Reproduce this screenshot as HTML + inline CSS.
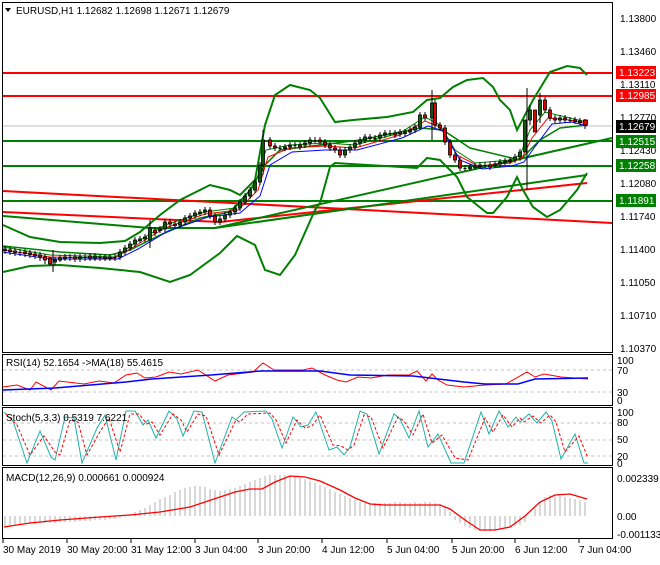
<!DOCTYPE html>
<html><head><meta charset="utf-8"><style>
html,body{margin:0;padding:0;background:#fff;}
body{width:660px;height:560px;overflow:hidden;font-family:"Liberation Sans",sans-serif;}
svg text{font-family:"Liberation Sans",sans-serif;font-size:10px;fill:#000;}
.g{fill:#0a5a0a;stroke:#000;stroke-width:0.8}
.r{fill:#e00000;stroke:#000;stroke-width:0.8}
.k{fill:#000}
</style></head><body>
<svg width="660" height="560" viewBox="0 0 660 560" xmlns="http://www.w3.org/2000/svg">
<rect width="660" height="560" fill="#fff"/>
<g fill="none" stroke="#000" stroke-width="1">
<rect x="2.5" y="2.5" width="610" height="350"/>
<rect x="2.5" y="354.5" width="610" height="51"/>
<rect x="2.5" y="407.5" width="610" height="58"/>
<rect x="2.5" y="467.5" width="610" height="71"/>
</g>
<g shape-rendering="crispEdges">
<line x1="3" y1="126" x2="612" y2="126" stroke="#c0c0c0"/>
<line x1="3" y1="73" x2="612" y2="73" stroke="#f00" stroke-width="2"/>
<line x1="3" y1="96" x2="612" y2="96" stroke="#f00" stroke-width="2"/>
<line x1="3" y1="141" x2="612" y2="141" stroke="#008000" stroke-width="2"/>
<line x1="3" y1="166" x2="612" y2="166" stroke="#008000" stroke-width="2"/>
<line x1="3" y1="201" x2="612" y2="201" stroke="#008000" stroke-width="2"/>
</g>
<g fill="none" stroke-width="2">
<polyline stroke="#f00" points="3,191 612,223"/>
<polyline stroke="#f00" points="3,212 220,222 587,183"/>
<polyline stroke="#008000" points="3,216 150,228 215,228 587,175"/>
<polyline stroke="#008000" points="215,228 612,138"/>
<polyline stroke="#008000" points="3,225 30,237 60,242 100,243 125,241 140,232 160,215 180,200 200,190 210,185 230,190 240,195 255,180 265,125 275,95 290,85 310,90 320,98 335,122 353,120 387,117 413,112 427,100 440,98 453,87 467,80 483,78 493,87 500,100 510,110 517,130 533,100 550,72 567,66 580,68 587,75"/>
<polyline stroke="#008000" points="3,272 30,266 60,265 100,268 140,272 170,282 190,275 220,253 237,236 255,245 265,270 280,275 295,255 315,210 320,203 330,167 335,163 417,168 427,158 440,160 457,177 467,197 487,213 493,213 507,197 517,177 523,190 533,207 547,217 560,210 577,190 587,173"/>
<polyline stroke="#008000" stroke-width="1.5" points="3,246 60,252 110,255 130,250 160,235 200,218 230,212 250,190 265,165 280,150 320,145 360,140 420,128 443,130 470,148 520,160 540,140 560,128 587,125"/>
</g>
<g fill="none" stroke-width="1">
<polyline stroke="#008000" points="3,247 50,255 115,257 135,243 165,225 205,212 235,208 255,185 266,150 290,145 325,143 355,145 400,133 425,117 440,125 455,150 475,163 510,160 520,155 530,130 545,112 570,118 587,122"/>
<polyline stroke="#f00" points="3,250 50,257 115,258 135,246 165,228 205,214 238,210 258,190 268,157 290,148 325,146 355,148 400,135 425,121 440,127 457,155 478,166 510,163 522,158 532,138 548,118 570,120 587,124"/>
<polyline stroke="#00f" points="3,252 50,259 118,259 138,249 168,231 208,217 240,213 260,196 270,165 292,152 325,150 357,150 402,138 428,126 443,131 460,160 482,169 512,166 524,162 534,148 552,124 572,122 587,126"/>
</g>
<!-- wicks -->
<path stroke="#000" stroke-width="1" fill="none" d="M5 246v8M10 247v8M15 248v8M20 249v7M25 249v8M30 250v8M35 251v8M40 252v9M45 254v10M50 257v8M53 250v22M55 257v8M60 255v7M65 254v7M70 254v7M75 254v8M80 254v8M85 254v7M90 253v8M95 253v8M100 254v7M105 254v7M110 254v7M115 254v7M120 249v11M125 245v10M130 241v10M135 237v10M140 236v7M145 234v8M150 220v28M155 227v9M160 226v7M165 219v13M170 219v8M175 221v7M180 219v9M185 215v10M190 213v8M195 210v9M200 209v7M205 207v8M210 207v12M215 213v12M220 216v9M225 212v10M230 209v9M235 205v10M240 199v12M245 193v12M250 187v12M255 179v14M260 162v23M263 130v45M270 137v12M275 143v8M280 145v6M285 144v7M290 142v8M295 142v6M300 142v8M305 140v8M310 137v9M315 137v6M320 137v8M325 139v9M330 142v9M335 145v8M340 147v11M345 147v11M350 144v9M355 140v10M360 137v9M365 134v9M370 134v7M375 135v6M380 132v9M385 130v8M390 130v6M395 130v8M400 129v8M405 129v7M410 127v8M415 124v9M420 112v18M425 112v9M432 90v50M435 100v28M440 122v9M445 125v20M450 139v19M455 152v11M460 157v14M465 165v6M470 164v7M475 163v7M480 162v7M485 162v6M490 162v8M495 161v7M500 159v8M505 158v7M510 157v7M515 154v9M520 149v11M527 88v102M530 105v20M535 112v14M540 93v30M545 97v16M550 107v14M555 115v8M560 115v8M565 115v8M570 117v6M575 117v7M580 118v7M585 119v10"/>
<!-- bodies -->
<g>
<rect class="r" x="3.5" y="249" width="3" height="1.5"/><rect class="r" x="8.5" y="250" width="3" height="1.5"/><rect class="r" x="13.5" y="251" width="3" height="1.5"/><rect class="k" x="18.5" y="252" width="3" height="1"/><rect class="r" x="23.5" y="252" width="3" height="1.5"/><rect class="r" x="28.5" y="253" width="3" height="1.5"/><rect class="r" x="33.5" y="254" width="3" height="1.5"/><rect class="r" x="38.5" y="255" width="3" height="2"/><rect class="r" x="43.5" y="257" width="3" height="3"/><rect class="r" x="48.5" y="258" width="3" height="6"/>
<rect class="g" x="53.5" y="260" width="3" height="2"/><rect class="g" x="58.5" y="258" width="3" height="2"/><rect class="g" x="63.5" y="257" width="3" height="1.5"/><rect class="k" x="68.5" y="257" width="3" height="1"/><rect class="r" x="73.5" y="257" width="3" height="2"/><rect class="g" x="78.5" y="257" width="3" height="2"/><rect class="k" x="83.5" y="257" width="3" height="1"/><rect class="r" x="88.5" y="256" width="3" height="2"/><rect class="g" x="93.5" y="256" width="3" height="2"/><rect class="k" x="98.5" y="257" width="3" height="1"/><rect class="r" x="103.5" y="257" width="3" height="1.5"/><rect class="g" x="108.5" y="257" width="3" height="1.5"/><rect class="k" x="113.5" y="257" width="3" height="1"/>
<rect class="g" x="118.5" y="252" width="3" height="5"/><rect class="g" x="123.5" y="248" width="3" height="4"/><rect class="g" x="128.5" y="244" width="3" height="4"/><rect class="g" x="133.5" y="240" width="3" height="4"/><rect class="g" x="138.5" y="239" width="3" height="1.5"/><rect class="g" x="143.5" y="237" width="3" height="2"/><rect class="g" x="148.5" y="228" width="3" height="12"/><rect class="r" x="153.5" y="230" width="3" height="3"/><rect class="g" x="158.5" y="229" width="3" height="1.5"/><rect class="g" x="163.5" y="222" width="3" height="7"/><rect class="r" x="168.5" y="222" width="3" height="2"/><rect class="r" x="173.5" y="224" width="3" height="1.5"/><rect class="g" x="178.5" y="222" width="3" height="3"/><rect class="g" x="183.5" y="218" width="3" height="4"/><rect class="g" x="188.5" y="216" width="3" height="2"/><rect class="g" x="193.5" y="213" width="3" height="3"/><rect class="g" x="198.5" y="212" width="3" height="1.5"/><rect class="g" x="203.5" y="210" width="3" height="2"/><rect class="r" x="208.5" y="210" width="3" height="6"/><rect class="r" x="213.5" y="216" width="3" height="6"/><rect class="g" x="218.5" y="219" width="3" height="3"/><rect class="g" x="223.5" y="215" width="3" height="4"/><rect class="g" x="228.5" y="212" width="3" height="3"/><rect class="g" x="233.5" y="208" width="3" height="4"/><rect class="g" x="238.5" y="202" width="3" height="6"/><rect class="g" x="243.5" y="196" width="3" height="6"/><rect class="g" x="248.5" y="190" width="3" height="6"/><rect class="g" x="253.5" y="182" width="3" height="8"/><rect class="g" x="258.5" y="165" width="3" height="17"/><rect class="g" x="261.5" y="140" width="3" height="25"/>
<rect class="r" x="268.5" y="140" width="3" height="6"/><rect class="r" x="273.5" y="146" width="3" height="2"/><rect class="k" x="278.5" y="148" width="3" height="1"/><rect class="g" x="283.5" y="147" width="3" height="1.5"/><rect class="g" x="288.5" y="145" width="3" height="2"/><rect class="k" x="293.5" y="145" width="3" height="1"/><rect class="r" x="298.5" y="145" width="3" height="2"/><rect class="g" x="303.5" y="143" width="3" height="2"/><rect class="g" x="308.5" y="140" width="3" height="3"/><rect class="k" x="313.5" y="140" width="3" height="1"/><rect class="r" x="318.5" y="140" width="3" height="2"/><rect class="r" x="323.5" y="142" width="3" height="3"/><rect class="r" x="328.5" y="145" width="3" height="3"/><rect class="r" x="333.5" y="148" width="3" height="2"/><rect class="r" x="338.5" y="150" width="3" height="5"/><rect class="g" x="343.5" y="150" width="3" height="5"/><rect class="g" x="348.5" y="147" width="3" height="3"/><rect class="g" x="353.5" y="143" width="3" height="4"/><rect class="g" x="358.5" y="140" width="3" height="3"/><rect class="g" x="363.5" y="137" width="3" height="3"/><rect class="r" x="368.5" y="137" width="3" height="1.5"/><rect class="k" x="373.5" y="138" width="3" height="1"/><rect class="g" x="378.5" y="135" width="3" height="3"/><rect class="g" x="383.5" y="133" width="3" height="2"/><rect class="k" x="388.5" y="133" width="3" height="1"/><rect class="r" x="393.5" y="133" width="3" height="2"/><rect class="g" x="398.5" y="132" width="3" height="2"/><rect class="g" x="403.5" y="132" width="3" height="1.5"/><rect class="g" x="408.5" y="130" width="3" height="2"/><rect class="g" x="413.5" y="127" width="3" height="3"/><rect class="g" x="418.5" y="115" width="3" height="12"/><rect class="r" x="423.5" y="115" width="3" height="3"/><rect class="g" x="430.5" y="103" width="3" height="15"/><rect class="r" x="433.5" y="103" width="3" height="22"/><rect class="r" x="438.5" y="125" width="3" height="3"/><rect class="r" x="443.5" y="128" width="3" height="14"/><rect class="r" x="448.5" y="142" width="3" height="13"/><rect class="r" x="453.5" y="155" width="3" height="5"/><rect class="r" x="458.5" y="160" width="3" height="8"/><rect class="k" x="463.5" y="168" width="3" height="1"/><rect class="g" x="468.5" y="167" width="3" height="1.5"/><rect class="g" x="473.5" y="166" width="3" height="1.5"/><rect class="g" x="478.5" y="165" width="3" height="1.5"/><rect class="k" x="483.5" y="165" width="3" height="1"/><rect class="r" x="488.5" y="165" width="3" height="2"/><rect class="g" x="493.5" y="164" width="3" height="1.5"/><rect class="g" x="498.5" y="162" width="3" height="2"/><rect class="g" x="503.5" y="161" width="3" height="1.5"/><rect class="g" x="508.5" y="160" width="3" height="1.5"/><rect class="g" x="513.5" y="157" width="3" height="3"/><rect class="g" x="518.5" y="152" width="3" height="5"/><rect class="g" x="523.5" y="120" width="3" height="32"/><rect class="g" x="528.5" y="110" width="3" height="10"/><rect class="r" x="533.5" y="110" width="3" height="22"/><rect class="g" x="538.5" y="100" width="3" height="15"/><rect class="r" x="543.5" y="100" width="3" height="10"/><rect class="r" x="548.5" y="110" width="3" height="8"/><rect class="r" x="553.5" y="118" width="3" height="2"/><rect class="g" x="558.5" y="118" width="3" height="2"/><rect class="r" x="563.5" y="118" width="3" height="2"/><rect class="k" x="568.5" y="120" width="3" height="1"/><rect class="r" x="573.5" y="120" width="3" height="1.5"/><rect class="r" x="578.5" y="121" width="3" height="1.5"/><rect class="r" x="583.5" y="120" width="4" height="5"/>
</g>
<path d="M5 8 L11 8 L8 12 Z" fill="#000"/>
<text x="16" y="14">EURUSD,H1  1.12682 1.12698 1.12671 1.12679</text>
<g>
<text x="620" y="22">1.13800</text>
<text x="620" y="55">1.13460</text>
<text x="620" y="88">1.13110</text>
<text x="620" y="121">1.12770</text>
<text x="620" y="154">1.12430</text>
<text x="620" y="187">1.12080</text>
<text x="620" y="220">1.11740</text>
<text x="620" y="253">1.11400</text>
<text x="620" y="286">1.11050</text>
<text x="620" y="319">1.10710</text>
<text x="620" y="352">1.10370</text>
<rect x="616" y="66" width="40" height="13" fill="#f00"/><text x="619" y="76" style="fill:#fff">1.13223</text>
<rect x="616" y="89" width="40" height="13" fill="#f00"/><text x="619" y="99" style="fill:#fff">1.12985</text>
<rect x="616" y="120" width="40" height="13" fill="#000"/><text x="619" y="130" style="fill:#fff">1.12679</text>
<rect x="616" y="135" width="40" height="13" fill="#008000"/><text x="619" y="145" style="fill:#fff">1.12515</text>
<rect x="616" y="159" width="40" height="13" fill="#008000"/><text x="619" y="169" style="fill:#fff">1.12258</text>
<rect x="616" y="194" width="40" height="13" fill="#008000"/><text x="619" y="204" style="fill:#fff">1.11891</text>
</g>
<g stroke="#c0c0c0" stroke-dasharray="3,3" shape-rendering="crispEdges">
<line x1="3" y1="370" x2="612" y2="370"/><line x1="3" y1="392" x2="612" y2="392"/>
<line x1="3" y1="423" x2="612" y2="423"/><line x1="3" y1="440" x2="612" y2="440"/><line x1="3" y1="456" x2="612" y2="456"/>
</g>
<polyline fill="none" stroke="#f00" points="3,387 17,385 30,390 36,382 51,390 59,381 84,384 99,381 114,383 126,375 137,373 145,378 156,377 169,372 181,374 198,370 215,381 228,375 253,372 263,363 274,370 303,370 312,368 325,375 337,380 346,382 358,377 371,378 388,375 409,375 417,371 426,381 432,374 438,380 447,385 464,387 485,385 506,384 527,372 535,377 544,374 561,377 588,379"/>
<polyline fill="none" stroke="#00f" stroke-width="1.5" points="3,390 55,388 126,382 152,379 211,375 261,371 320,371 350,375 413,376 447,380 464,382 485,384 518,384 535,379 588,378"/>
<text x="6" y="366">RSI(14) 52.1654  -&gt;MA(18) 55.4615</text>
<text x="617" y="364">100</text><text x="617" y="374">70</text><text x="617" y="396">30</text><text x="617" y="404">0</text>
<polyline fill="none" stroke="#20b2aa" points="4,412 13,421 27,463 40,431 51,457 55,460 65,417 74,418 82,463 97,428 105,415 116,460 126,411 135,411 143,425 148,420 156,438 169,411 177,419 183,436 194,411 202,412 215,463 232,417 236,420 244,412 266,411 272,419 282,448 293,417 301,427 308,425 316,412 329,450 337,447 344,455 350,447 360,411 367,414 379,454 394,414 400,419 409,438 419,411 428,447 438,434 451,463 464,463 481,412 489,434 499,411 508,427 516,417 520,422 529,414 537,423 546,412 552,421 561,459 575,434 584,463 588,463"/>
<polyline fill="none" stroke="#f00" stroke-dasharray="3,2" points="6,414 17,425 30,455 44,436 55,452 60,455 70,420 78,422 87,455 101,430 109,418 120,452 130,414 139,414 147,424 152,422 160,435 173,414 181,420 187,432 198,414 206,416 219,455 236,420 240,422 248,414 270,413 276,420 286,443 297,420 305,428 312,426 320,415 333,445 341,446 348,450 354,445 364,415 371,417 383,448 398,417 404,421 413,435 423,414 432,443 442,435 455,458 468,460 485,418 493,432 503,415 512,427 520,418 524,422 533,416 541,423 550,415 556,422 565,452 579,436 588,458"/>
<text x="6" y="421">Stoch(5,3,3) 0.5319 7.6221</text>
<text x="617" y="416">100</text><text x="617" y="426">80</text><text x="617" y="443">50</text><text x="617" y="460">20</text><text x="617" y="467">0</text>
<g stroke="#b0b0b0" stroke-width="1">
<path d="M5 516V526M10 516V526M15 516V525M20 516V525M25 516V524M30 516V524M35 516V524M40 516V523M45 516V523M50 516V523M55 516V523M60 516V522M65 516V522M70 516V522M75 516V522M80 516V521M85 516V521M90 516V521M95 516V520M100 516V520M105 516V520M110 516V519M115 516V519M120 516V518M125 516V517M130 516V514M135 516V512M140 516V510M145 516V508M150 516V505M155 516V502M160 516V499M165 516V497M170 516V495M175 516V492M180 516V490M185 516V488M190 516V487M195 516V486M200 516V486M205 516V487M210 516V489M215 516V490M220 516V491M225 516V490M230 516V489M235 516V488M240 516V486M245 516V484M250 516V482M255 516V480M260 516V478M265 516V476M270 516V475M275 516V475M280 516V475M285 516V475M290 516V476M295 516V477M300 516V478M305 516V479M310 516V481M315 516V483M320 516V485M325 516V487M330 516V489M335 516V492M340 516V494M345 516V496M350 516V498M355 516V500M360 516V502M365 516V503M370 516V504M375 516V503M380 516V503M385 516V503M390 516V503M395 516V502M400 516V502M405 516V503M410 516V503M415 516V502M420 516V503M425 516V502M430 516V502M435 516V503M440 516V504M445 516V507M450 516V512M455 516V520M460 516V523M465 516V526M470 516V528M475 516V530M480 516V530M485 516V531M490 516V531M495 516V530M500 516V529M505 516V528M510 516V527M515 516V526M520 516V525M525 516V522M530 516V516M535 516V508M540 516V502M545 516V497M550 516V495M555 516V495M560 516V496M565 516V497M570 516V498M575 516V499M580 516V500M585 516V502"/>
</g>
<polyline fill="none" stroke="#f00" stroke-width="1.3" points="4,527 30,523 60,520 100,517 130,515 160,512 190,507 220,497 235,492 250,489 262,489 275,482 290,476 305,477 320,481 340,490 355,498 370,504 385,505 440,505 450,509 465,520 480,530 495,530 510,527 525,516 540,502 555,495 570,494 587,499"/>
<text x="6" y="481">MACD(12,26,9) 0.000661 0.000924</text>
<text x="617" y="482">0.002339</text><text x="617" y="520">0.00</text><text x="617" y="538">-0.001133</text>
<g stroke="#000" shape-rendering="crispEdges">
<path d="M3 539v4M67 539v4M131 539v4M195 539v4M258 539v4M322 539v4M387 539v4M452 539v4M515 539v4M579 539v4"/>
</g>
<text x="3" y="553">30 May 2019</text>
<text x="67" y="553">30 May 20:00</text>
<text x="131" y="553">31 May 12:00</text>
<text x="195" y="553">3 Jun 04:00</text>
<text x="258" y="553">3 Jun 20:00</text>
<text x="322" y="553">4 Jun 12:00</text>
<text x="387" y="553">5 Jun 04:00</text>
<text x="452" y="553">5 Jun 20:00</text>
<text x="515" y="553">6 Jun 12:00</text>
<text x="579" y="553">7 Jun 04:00</text>
</svg>
</body></html>
